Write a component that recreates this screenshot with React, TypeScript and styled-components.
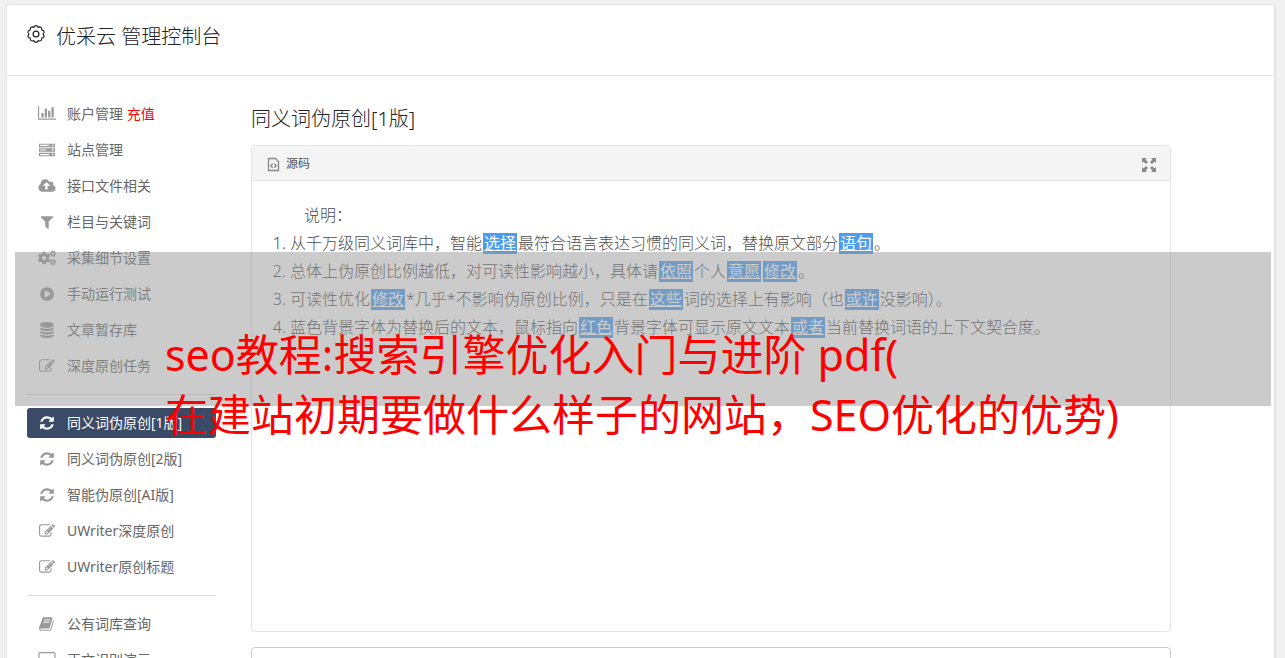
import React from "react";
import styled, { createGlobalStyle } from "styled-components";
import { FaCogs } from "react-icons/fa";

const GlobalStyle = createGlobalStyle`
  *, *::before, *::after { box-sizing: border-box; }
  html { overflow: hidden; }
  body {
    margin: 0;
    background: #f0f0f0;
    color: #4c4c4c;
    font-family: "Noto Sans", "Noto Sans CJK SC", sans-serif;
    font-size: 14px;
  }
`;

const Page = styled.div`
  position: relative;
  height: 100vh;
  padding: 4px 9px 0 6px;
  overflow: hidden;
`;

const Panel = styled.div`
  min-height: 100%;
  background: #fff;
  border: 1px solid #e4e4e4;
  border-right-width: 2px;
  border-radius: 4px 4px 0 0;
`;

const Header = styled.header`
  display: flex;
  align-items: flex-start;
  gap: 10px;
  height: 71px;
  padding: 16px 19px;
  border-bottom: 1px solid #e4e4e4;
  color: #222;
  svg { margin-top: 3px; }
`;

const Title = styled.h1`
  margin: 0;
  font-size: 20px;
  line-height: 32px;
  font-weight: 300;
`;

const Columns = styled.div`
  display: flex;
  align-items: flex-start;
  padding: 20px 103px 0 20px;
  gap: 35px;
`;

const Nav = styled.nav`
  flex: 0 0 189px;
`;

const NavGroup = styled.ul`
  list-style: none;
  margin: 0;
  padding: 0;
  & + & {
    margin-top: 10px;
    padding-top: 10px;
    border-top: 1px solid #ddd;
  }
`;

const NavItem = styled.li`
  padding: 3px 0;
`;

const NavLink = styled.a<{ $active?: boolean }>`
  display: flex;
  align-items: center;
  height: 30px;
  padding-left: 10px;
  gap: 10px;
  border-radius: 3px;
  white-space: nowrap;
  text-decoration: none;
  color: ${(p) => (p.$active ? "#fff" : "#666")};
  background: ${(p) => (p.$active ? "#3b4a66" : "transparent")};
  svg { color: ${(p) => (p.$active ? "#fff" : "#999")}; }
`;

const IconSlot = styled.span`
  display: flex;
  justify-content: center;
  flex: 0 0 20px;
`;

const NavText = styled.span`
  padding-bottom: 2px;
`;

const Recharge = styled.span`
  color: #f00;
`;

const Main = styled.main`
  flex: 1;
  min-width: 0;
  padding-top: 7px;
`;

const Subtitle = styled.h2`
  margin: 0 0 10px;
  font-size: 20px;
  line-height: 32px;
  font-weight: 300;
  color: #222;
`;

const Editor = styled.section`
  height: 487px;
  border: 1px solid #e4e4e4;
  border-radius: 4px;
`;

const Toolbar = styled.div`
  display: flex;
  justify-content: space-between;
  align-items: center;
  height: 35px;
  padding: 0 13px 0 15px;
  border-bottom: 1px solid #e4e4e4;
  border-radius: 3px 3px 0 0;
  background: #f4f4f4;
`;

const ToolButton = styled.button`
  display: flex;
  align-items: center;
  gap: 6px;
  padding: 0;
  border: 0;
  background: none;
  font: inherit;
  font-size: 12px;
  color: #555;
  svg { color: #888; margin-top: 3px; }
`;

const Content = styled.div`
  padding: 20px;
  font-size: 16px;
  line-height: 28px;
  font-weight: 300;
`;

const Intro = styled.p`
  margin: 0;
  padding-left: 32px;
`;

const Rules = styled.ol`
  margin: 0;
  padding-left: 18px;
  white-space: nowrap;
`;

const Word = styled.a`
  margin: 0 1px;
  padding: 0 1px;
  background: #4a9df3;
  color: #fff;
  line-height: 21px;
  display: inline-block;
  font-weight: 400;
  text-decoration: underline;
`;

const Output = styled.textarea`
  display: block;
  width: 100%;
  height: 120px;
  margin-top: 15px;
  border: 1px solid #ccc;
  border-radius: 4px;
  resize: none;
`;

const Veil = styled.div`
  position: absolute;
  top: 252px;
  left: 15px;
  right: 14px;
  height: 154px;
  background: rgba(153, 153, 153, 0.51);
`;

const Caption = styled.p`
  position: absolute;
  top: 325px;
  left: 165px;
  margin: 0;
  font-size: 43px;
  line-height: 60px;
  white-space: nowrap;
  color: #f00;
`;

const PATHS = {
  chart:
    "M640 768v512h-256v-512h256zM1024 256v1024h-256v-1024h256zM2048 1408v128h-2048v-1536h128v1408h1920zM1408 512v768h-256v-768h256zM1792 128v1152h-256v-1152h256z",
  server:
    "M0 192h1792v384H0zM0 704h1792v384H0zM0 1216h1792v384H0zM128 320v128h1024v-128zM128 832v128h640v-128zM128 1344v128h1024v-128zM1472 304v160h160v-160zM1472 816v160h160v-160zM1472 1328v160h160v-160z",
  cloud:
    "M1280 864q0-14-9-23l-352-352q-9-9-23-9t-23 9l-351 351q-10 12-10 24 0 14 9 23t23 9h224v352q0 13 9.5 22.5t22.5 9.5h192q13 0 22.5-9.5t9.5-22.5v-352h224q13 0 22.5-9.5t9.5-22.5zm640 288q0 159-112.5 271.5t-271.5 112.5h-1088q-185 0-316.5-131.5t-131.5-316.5q0-130 70-240t188-165q-2-30-2-43 0-212 150-362t362-150q156 0 285.5 87t188.5 231q71-62 166-62 106 0 181 75t75 181q0 76-41 138 130 31 213.5 135.5t83.5 238.5z",
  filter:
    "M1595 295q17 41-14 70l-493 493v742q0 42-39 59-13 5-25 5-27 0-45-19l-256-256q-19-19-19-45v-486l-493-493q-31-29-14-70 17-39 59-39h1280q42 0 59 39z",
  play:
    "M896 128q209 0 385.5 103t279.5 279.5 103 385.5-103 385.5-279.5 279.5-385.5 103-385.5-103-279.5-279.5-103-385.5 103-385.5 279.5-279.5 385.5-103zm384 823q32-18 32-55t-32-55l-544-320q-31-19-64-1-32 19-32 56v640q0 37 32 56 16 8 32 8 17 0 32-9z",
  database:
    "M896 768q237 0 443-43t325-127v170q0 69-103 128t-280 93.5-385 34.5-385-34.5-280-93.5-103-128v-170q119 84 325 127t443 43zm0 768q237 0 443-43t325-127v170q0 69-103 128t-280 93.5-385 34.5-385-34.5-280-93.5-103-128v-170q119 84 325 127t443 43zm0-384q237 0 443-43t325-127v170q0 69-103 128t-280 93.5-385 34.5-385-34.5-280-93.5-103-128v-170q119 84 325 127t443 43zm0-1152q208 0 385 34.5t280 93.5 103 128v128q0 69-103 128t-280 93.5-385 34.5-385-34.5-280-93.5-103-128v-128q0-69 103-128t280-93.5 385-34.5z",
  edit:
    "M888 1184l116-116-152-152-116 116v56h96v96h56zm440-720q-16-16-33 1l-350 350q-17 17-1 33t33-1l350-350q17-17 1-33zm80 594v190q0 119-84.5 203.5t-203.5 84.5h-832q-119 0-203.5-84.5t-84.5-203.5v-832q0-119 84.5-203.5t203.5-84.5h832q63 0 117 25 15 7 18 23 3 17-9 29l-49 49q-14 14-32 8-23-6-45-6h-832q-66 0-113 47t-47 113v832q0 66 47 113t113 47h832q66 0 113-47t47-113v-126q0-13 9-22l64-64q15-15 35-7t20 29zm-96-738l288 288-672 672h-288v-288zm444 132l-92 92-288-288 92-92q28-28 68-28t68 28l152 152q28 28 28 68t-28 68z",
  refresh:
    "M1639 1056q0 5-1 7-64 268-268 434.5t-478 166.5q-146 0-282.5-55t-243.5-157l-129 129q-19 19-45 19t-45-19-19-45v-448q0-26 19-45t45-19h448q26 0 45 19t19 45-19 45l-137 137q71 66 161 102t187 36q134 0 250-65t186-179q11-17 53-117 8-23 30-23h192q13 0 22.5 9.5t9.5 22.5zm25-800v448q0 26-19 45t-45 19h-448q-26 0-45-19t-19-45 19-45l138-138q-148-137-349-137-134 0-250 65t-186 179q-11 17-53 117-8 23-30 23h-199q-13 0-22.5-9.5t-9.5-22.5v-7q65-268 270-434.5t480-166.5q146 0 284 55.5t245 156.5l130-129q19-19 45-19t45 19 19 45z",
  book:
    "M1639 478q40 57 18 129l-275 906q-19 64-76.5 107.5t-122.5 43.5h-923q-77 0-148.5-53.5t-99.5-131.5q-24-67-2-127 0-4 3-27t4-37q1-8-3-21.5t-3-19.5q2-11 8-21t16.5-23.5 16.5-23.5q23-38 45-91.5t30-91.5q3-10 .5-30t-.5-28q3-11 17-28t17-23q21-36 42-92t25-90q1-9-2.5-32t.5-28q4-13 22-30.5t22-22.5q19-26 42.5-84.5t27.5-96.5q1-8-3-25.5t-2-26.5q2-8 9-18t18-23 17-21q8-12 16.5-30.5t15-35 16-36 19.5-32 26.5-23.5 36-11.5 47.5 5.5l-1 3q38-9 51-9h761q74 0 114 56t18 130l-274 906q-36 119-71.5 153.5t-128.5 34.5h-869q-27 0-38 15-11 16-1 43 24 70 144 70h923q29 0 56-15.5t35-41.5l300-987q7-22 5-57 38 15 59 43zm-1064 2q-4 13 2 22.5t20 9.5h608q13 0 25.5-9.5t16.5-22.5l21-64q4-13-2-22.5t-20-9.5h-608q-13 0-25.5 9.5t-16.5 22.5zm-83 256q-4 13 2 22.5t20 9.5h608q13 0 25.5-9.5t16.5-22.5l21-64q4-13-2-22.5t-20-9.5h-608q-13 0-25.5 9.5t-16.5 22.5z",
  desktop:
    "M1792 992v-832q0-13-9.5-22.5t-22.5-9.5h-1600q-13 0-22.5 9.5t-9.5 22.5v832q0 13 9.5 22.5t22.5 9.5h1600q13 0 22.5-9.5t9.5-22.5zm128-832v1088q0 66-47 113t-113 47h-544q0 37 16 77.5t32 71 16 43.5q0 26-19 45t-45 19h-512q-26 0-45-19t-19-45q0-14 16-44t32-70 16-78h-544q-66 0-113-47t-47-113v-1088q0-66 47-113t113-47h1600q66 0 113 47t47 113z",
};

type Shape = keyof typeof PATHS;

const WIDE: Partial<Record<Shape, number>> = { chart: 2048, cloud: 1920, desktop: 1920 };

function Glyph({ shape }: { shape: Shape }) {
  const w = WIDE[shape] ?? 1792;
  return (
    <svg width={w > 1792 ? 18 : 16} height="16" viewBox={`0 0 ${w} 1792`} fill="currentColor" fillRule="evenodd" aria-hidden="true">
      <path d={PATHS[shape]} />
    </svg>
  );
}

function GearIcon() {
  return (
    <svg width="20" height="20" viewBox="0 0 20 20" fill="none" stroke="currentColor" strokeWidth="1.2" strokeLinejoin="round" aria-hidden="true">
      <path d="M8.600 2.200Q10 1 11.400 2.200L12.200 3.400 13.700 2.900Q15.700 3 15.700 4.600L15.900 6 17.300 6.600Q18.600 7.700 17.800 9L17 10 17.800 11.200Q18.500 12.600 17.200 13.500L15.800 14 15.600 15.500Q15.300 17.100 13.600 17L12.200 16.600 11.300 17.800Q10 19 8.700 17.800L7.800 16.600 6.400 17Q4.700 17.100 4.400 15.500L4.200 14 2.800 13.500Q1.500 12.600 2.200 11.200L3 10 2.200 9Q1.400 7.700 2.700 6.600L4.100 6 4.300 4.600Q4.300 3 6.300 2.900L7.800 3.400z" />
      <circle cx="10" cy="10" r="2.900" />
    </svg>
  );
}

function SourceIcon() {
  return (
    <svg width="13" height="15" viewBox="0 0 13 15" fill="none" stroke="currentColor" strokeWidth="1.3" aria-hidden="true">
      <path d="M1.500 1.500h7l3 3v9h-10z" />
      <path d="M5.700 6.700L3.700 8.700l2 2M7.300 6.700l2 2-2 2" />
    </svg>
  );
}

function ExpandIcon() {
  return (
    <svg width="16" height="16" viewBox="0 0 16 16" fill="currentColor" aria-hidden="true">
      <path d="M1 1h5L4.500 2.500l2.500 2.500-2 2-2.500-2.500L1 6zM15 1v5l-1.500-1.500L11 7 9 5l2.500-2.500L10 1zM1 15v-5l1.500 1.500L5 9l2 2-2.500 2.500L6 15zM15 15h-5l1.500-1.500L9 11l2-2 2.500 2.500L15 10z" />
    </svg>
  );
}

interface Entry {
  label: string;
  icon: Shape | "cogs";
  active?: boolean;
  extra?: string;
}

const GROUPS: Entry[][] = [
  [
    { label: "账户管理", icon: "chart", extra: "充值" },
    { label: "站点管理", icon: "server" },
    { label: "接口文件相关", icon: "cloud" },
    { label: "栏目与关键词", icon: "filter" },
    { label: "采集细节设置", icon: "cogs" },
    { label: "手动运行测试", icon: "play" },
    { label: "文章暂存库", icon: "database" },
    { label: "深度原创任务", icon: "edit" },
  ],
  [
    { label: "同义词伪原创[1版]", icon: "refresh", active: true },
    { label: "同义词伪原创[2版]", icon: "refresh" },
    { label: "智能伪原创[AI版]", icon: "refresh" },
    { label: "UWriter深度原创", icon: "edit" },
    { label: "UWriter原创标题", icon: "edit" },
  ],
  [
    { label: "公有词库查询", icon: "book" },
    { label: "正文识别演示", icon: "desktop" },
  ],
];

export default function App() {
  return (
    <Page>
      <GlobalStyle />
      <Panel>
        <Header>
          <GearIcon />
          <Title>优采云 管理控制台</Title>
        </Header>
        <Columns>
          <Nav>
            {GROUPS.map((group, i) => (
              <NavGroup key={i}>
                {group.map((item) => (
                  <NavItem key={item.label}>
                    <NavLink href="#" $active={item.active}>
                      <IconSlot>{item.icon === "cogs" ? <FaCogs size={18} /> : <Glyph shape={item.icon} />}</IconSlot>
                      <NavText>
                        {item.label}
                        {item.extra && <Recharge> {item.extra}</Recharge>}
                      </NavText>
                    </NavLink>
                  </NavItem>
                ))}
              </NavGroup>
            ))}
          </Nav>
          <Main>
            <Subtitle>同义词伪原创[1版]</Subtitle>
            <Editor>
              <Toolbar>
                <ToolButton type="button">
                  <SourceIcon />
                  源码
                </ToolButton>
                <ToolButton type="button" aria-label="全屏">
                  <ExpandIcon />
                </ToolButton>
              </Toolbar>
              <Content>
                <Intro>说明：</Intro>
                <Rules>
                  <li>
                    从千万级同义词库中，智能<Word href="#">选择</Word>最符合语言表达习惯的同义词，替换原文部分<Word href="#">语句</Word>。
                  </li>
                  <li>
                    总体上伪原创比例越低，对可读性影响越小，具体请<Word href="#">依照</Word>个人<Word href="#">意愿</Word><Word href="#">修改</Word>。
                  </li>
                  <li>
                    可读性优化<Word href="#">修改</Word>*几乎*不影响伪原创比例，只是在<Word href="#">这些</Word>词的选择上有影响（也<Word href="#">或许</Word>没影响）。
                  </li>
                  <li>
                    蓝色背景字体为替换后的文本，鼠标指向<Word href="#">红色</Word>背景字体可显示原文文本<Word href="#">或者</Word>当前替换词语的上下文契合度。
                  </li>
                </Rules>
              </Content>
            </Editor>
            <Output aria-label="正文" />
          </Main>
        </Columns>
      </Panel>
      <Veil />
      <Caption>
        seo教程:搜索引擎优化入门与进阶 pdf(
        <br />
        在建站初期要做什么样子的网站，SEO优化的优势)
      </Caption>
    </Page>
  );
}
